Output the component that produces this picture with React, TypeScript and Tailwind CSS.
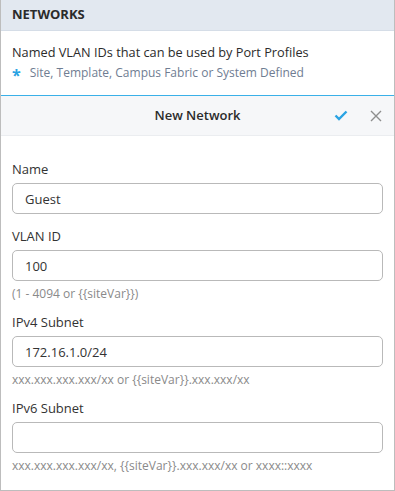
import React from 'react';

const inputCls =
  'w-full h-[31px] rounded-[5px] border border-[#b9b9b9] bg-white px-3 text-[13px] text-[#333] outline-none';

function Field({ label, value, hint }: { label: string; value: string; hint?: string }) {
  return (
    <div className="flex flex-col">
      <label className="text-[13px] leading-[18px] text-[#333] mb-[5px]">{label}</label>
      <input className={inputCls} defaultValue={value} />
      {hint && <div className="mt-[5px] text-[12px] leading-[16px] text-[#8a8a8a]">{hint}</div>}
    </div>
  );
}

export default function App() {
  return (
    <div
      className="w-[395px] h-[491px] bg-white border-x border-b border-[#bdbdbd] overflow-hidden"
      style={{ fontFamily: '"Open Sans", sans-serif' }}
    >
      <div className="h-[31px] bg-[#e2e8f0] border-b border-[#d5dde7] flex items-center px-[11px]">
        <span className="text-[13px] font-bold text-[#2b2b2b]">NETWORKS</span>
      </div>
      <div className="h-[64px] px-[11px] pt-[11px]">
        <div className="text-[12.75px] leading-[20px] text-[#2b2b2b]">Named VLAN IDs that can be used by Port Profiles</div>
        <div className="flex items-center text-[12px] leading-[20px] text-[#6f7d92] mt-[1px]">
          <span className="text-[#2aa3e3] text-[16px] font-bold mr-[9px] leading-none mt-[3px]">*</span>
          Site, Template, Campus Fabric or System Defined
        </div>
      </div>
      <div className="h-[41px] bg-[#f6f7f9] border-t border-[#3ab0e8] border-b border-b-[#ebedf0] flex items-center relative">
        <div className="flex-1 text-center text-[13px] font-semibold text-[#2b2b2b]">New Network</div>
        <div className="absolute right-[12px] top-0 h-full flex items-center gap-[22px]">
          <svg width="14" height="11" viewBox="0 0 14 11">
            <path d="M1.5 5.5 L5 9 L12.5 1.5" fill="none" stroke="#2aa3e3" strokeWidth="2.4" />
          </svg>
          <svg width="12" height="12" viewBox="0 0 12 12">
            <path d="M1 1 L11 11 M11 1 L1 11" stroke="#8e8e8e" strokeWidth="1.4" />
          </svg>
        </div>
      </div>
      <div className="px-[11px] pt-[24px] flex flex-col">
        <Field label="Name" value="Guest" />
        <div className="mt-[13px]">
          <Field label="VLAN ID" value="100" hint="(1 - 4094 or {{siteVar}})" />
        </div>
        <div className="mt-[11px]">
          <Field label="IPv4 Subnet" value="172.16.1.0/24" hint="xxx.xxx.xxx.xxx/xx or {{siteVar}}.xxx.xxx/xx" />
        </div>
        <div className="mt-[11px]">
          <Field label="IPv6 Subnet" value="" hint="xxx.xxx.xxx.xxx/xx, {{siteVar}}.xxx.xxx/xx or xxxx::xxxx" />
        </div>
      </div>
    </div>
  );
}
